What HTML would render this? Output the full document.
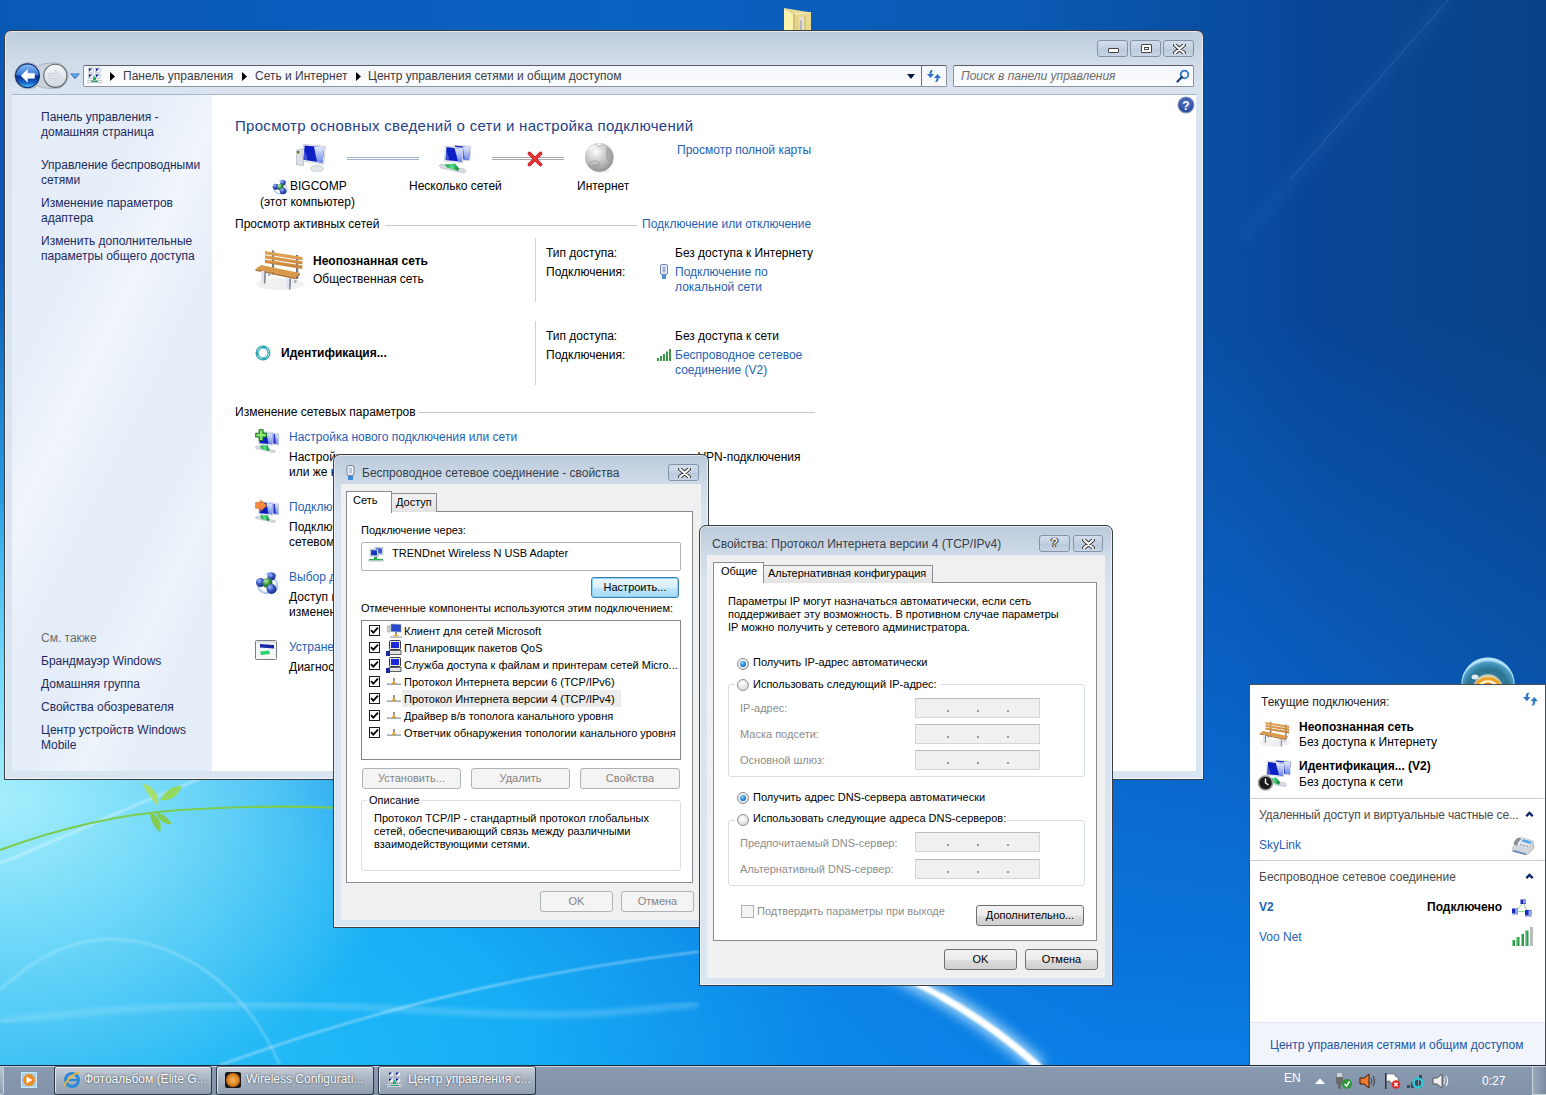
<!DOCTYPE html>
<html><head><meta charset="utf-8">
<style>
*{margin:0;padding:0;box-sizing:border-box}
html,body{width:1546px;height:1095px;overflow:hidden}
body{position:relative;font-family:"Liberation Sans",sans-serif;font-size:12px;color:#000;background:#0a56b0}
.a{position:absolute}
.t{position:absolute;white-space:nowrap;line-height:12px;font-size:12px}
.t11{position:absolute;white-space:nowrap;line-height:11px;font-size:11px}
#desk{left:0;top:0;width:1546px;height:1065px;overflow:hidden;
 background:
  radial-gradient(ellipse 420px 300px at 0px 800px, rgba(165,238,252,1) 0%, rgba(130,225,250,.75) 45%, rgba(100,210,248,0) 100%),
  radial-gradient(ellipse 380px 560px at 0px 820px, rgba(70,200,245,1) 0%, rgba(50,185,242,.8) 50%, rgba(30,160,238,0) 100%),
  linear-gradient(90deg, rgba(6,40,100,0) 80%, rgba(6,40,100,.22) 100%),
  radial-gradient(ellipse 1000px 560px at 120px 1065px, rgba(36,192,248,1) 0%, rgba(24,176,246,.95) 40%, rgba(12,140,236,.6) 72%, rgba(10,110,220,0) 100%),
  linear-gradient(180deg, rgba(10,100,210,0) 0%, rgba(10,100,210,0) 30%, rgba(10,110,218,.7) 70%, rgba(10,125,228,1) 100%),
  linear-gradient(90deg,#0a58b6 0%,#0a62c2 40%,#0a5ab4 65%,#08489a 85%,#0a4890 100%);}
/* window frame */
.frame{position:absolute;border:1px solid #3a3d42;border-radius:7px 7px 0 0;
 background:linear-gradient(#bccbdc 0px,#cfdbe8 30px,#d9e4f0 60px,#d9e5f1 100%);
 box-shadow:inset 0 0 0 1px rgba(255,255,255,.55)}
.client{position:absolute;background:#f0f0f0}
.cap{position:absolute;border:1px solid #8293aa;border-radius:3px;background:linear-gradient(#d3dded,#c3d0e2 50%,#b9c8dc 51%,#c8d5e6)}
.link{color:#1e62b4}
.btn{position:absolute;border:1px solid #707070;border-radius:3px;background:linear-gradient(#f2f2f2 0%,#ebebeb 50%,#dddddd 51%,#cfcfcf 100%);text-align:center;font-size:11px;line-height:18px;white-space:nowrap}
.btn.dis{border-color:#adb2b5;background:#f4f4f4;color:#838383}
.tab{position:absolute;border:1px solid #898c95;border-bottom:none;background:linear-gradient(#f2f2f2,#e3e3e3);font-size:11px;white-space:nowrap}
.grp{position:absolute;border:1px solid #d5dfe5;border-radius:3px}
.field{position:absolute;border:1px solid #d2d5d9;border-top-color:#b9bcc0;background:#f0f0f0}
.dis{color:#8d8d8d}
</style></head>
<body>
<svg width="0" height="0" style="position:absolute">
<defs>
 <linearGradient id="scr" x1="0" y1="0" x2="1" y2="1"><stop offset="0" stop-color="#1a2fb8"/><stop offset=".45" stop-color="#0a1aa0"/><stop offset=".5" stop-color="#8fa8f0"/><stop offset="1" stop-color="#c8d4fa"/></linearGradient>
 <linearGradient id="wood" x1="0" y1="0" x2="0" y2="1"><stop offset="0" stop-color="#e4a65a"/><stop offset="1" stop-color="#c7843a"/></linearGradient>
 <radialGradient id="globe" cx=".4" cy=".35" r=".7"><stop offset="0" stop-color="#f4f4f4"/><stop offset=".6" stop-color="#b9b9b9"/><stop offset="1" stop-color="#8a8a8a"/></radialGradient>
 <radialGradient id="ballB" cx=".35" cy=".3" r=".7"><stop offset="0" stop-color="#a9c0ff"/><stop offset=".5" stop-color="#3d5cc8"/><stop offset="1" stop-color="#1a2a8a"/></radialGradient>
 <radialGradient id="ballG" cx=".35" cy=".3" r=".7"><stop offset="0" stop-color="#c8f0c0"/><stop offset=".5" stop-color="#3a9a3a"/><stop offset="1" stop-color="#1a5a1a"/></radialGradient>
 <linearGradient id="cable" x1="0" y1="0" x2="1" y2="0"><stop offset="0" stop-color="#1a9a3a"/><stop offset=".5" stop-color="#5ae08a"/><stop offset="1" stop-color="#0a7a2a"/></linearGradient>
 <symbol id="bench" viewBox="0 0 60 55">
  <ellipse cx="30" cy="44" rx="24" ry="6" fill="#000" opacity=".06"/>
  <path d="M22 10.5h2.2v24h-2.2zM46 15h2.2v24h-2.2z" fill="#6e7888"/>
  <path d="M15 11L52.5 17V20.3L15 14.3Z M15 15.3L52.5 21.3V24.6L15 18.6Z M15 19.6L52.3 25.6V28.9L15 22.9Z" fill="url(#wood)"/>
  <path d="M5.5 29L11 25L50 33L45.5 37.5Z" fill="#d99a4c"/>
  <path d="M5.5 29L45.5 37.5V39.3L5.5 30.8Z" fill="#b57434"/>
  <path d="M45.5 37.5L50 33V34.6L45.5 39.3Z" fill="#a8692e"/>
  <path d="M11 31h4.5l-.6 12.5h-3.2z M36 38.5h4.5l-.6 11h-3.2z" fill="#dfe5f0"/>
  <path d="M14.5 31h1.5l-.6 12.5h-1.3z M39.5 38.5h1.5l-.6 11h-1.3z" fill="#6e7888"/>
  <path d="M18 33h2.5v3h-2.5zM44 40h2.5v3h-2.5z" fill="#a9b2c2"/>
 </symbol>
 <symbol id="pc" viewBox="0 0 30 28">
  <linearGradient id="scrL" x1="0" y1="0" x2="0" y2="1"><stop offset="0" stop-color="#e4ecff"/><stop offset="1" stop-color="#7088e8"/></linearGradient>
  <path d="M0.5 6L7.5 4.8V21.5L0.5 20.8Z" fill="#dcdfe3" stroke="#a9aeb5" stroke-width=".6"/>
  <rect x="1.3" y="7" width="2" height="2" fill="#4a5a3a"/><rect x="1.3" y="9" width="2" height="1" fill="#8ac040"/>
  <ellipse cx="21" cy="24.5" rx="6.5" ry="3.3" fill="#e2e5e8" stroke="#b9bdc3" stroke-width=".6"/>
  <path d="M7.5 0.3L29.5 2.3L27.8 20.2L6.2 16.9Z" fill="#f2f4f7" stroke="#b3b9c1" stroke-width=".6"/>
  <path d="M8.6 1.5L28.2 3.3L26.6 18.7L7.4 15.8Z" fill="#0b1fc2"/>
  <path d="M18 2.4L28.2 3.3L26.6 18.7L21 17.9Z" fill="url(#scrL)"/>
  <path d="M8.4 6L11.5 13.5L11 16.1L7.4 15.8Z" fill="#5a6ee0" opacity=".7"/>
 </symbol>
 <symbol id="multi" viewBox="0 0 32 29">
  <path d="M15 -0.3L32 1.5L30.8 16L15 14Z" fill="#f0f3f7" stroke="#b5bcc6" stroke-width=".5"/>
  <path d="M16 0.6L31.2 2.2L30 15L16 13.4Z" fill="#0b1fc2"/>
  <path d="M24 1.4L31.2 2.2L30 15L25.5 14.5Z" fill="url(#scrL)"/>
  <path d="M6.3 0.9L24.3 2.9L24 17.8L5.4 16Z" fill="#f2f4f7" stroke="#b5bcc6" stroke-width=".5"/>
  <path d="M7.5 2L23.3 3.9L23 16.7L6.5 15Z" fill="#0b1fc2"/>
  <path d="M15.5 2.9L23.3 3.9L23 16.7L19 16.2Z" fill="url(#scrL)"/>
  <path d="M7.3 6L10 12.5L9.6 15.3L6.5 15Z" fill="#5a6ee0" opacity=".7"/>
  <path d="M0.5 21C0 19.5 2 19 4 19.5L20 23.5C23 23 26 24 26.8 25.5C27.5 27 25.5 28.5 23 27.8L4 23.5C2 23.2 0.8 22.3 0.5 21Z" fill="#d5dadf" stroke="#aeb4ba" stroke-width=".5"/>
  <path d="M5.8 19.5L16 18.5L20 23.5L19 26L8 22.5Z" fill="url(#cable)"/>
 </symbol>
 <symbol id="atom" viewBox="0 0 24 24">
  <path d="M3 15C4 20 9 23 14 22" stroke="#a8c0e8" stroke-width="2.2" fill="none" opacity=".85"/>
  <path d="M11 3.5C14 1 19 1.5 21 5" stroke="#a8c0e8" stroke-width="2" fill="none" opacity=".85"/>
  <path d="M20 9C23 12 23 17 21 20" stroke="#a8c0e8" stroke-width="2" fill="none" opacity=".85"/>
  <circle cx="5.5" cy="11.5" r="4.5" fill="url(#ballB)"/>
  <circle cx="16.5" cy="5.5" r="4" fill="url(#ballB)"/>
  <circle cx="12.5" cy="12" r="5" fill="url(#ballG)"/>
  <circle cx="16.5" cy="18" r="5" fill="url(#ballB)"/>
 </symbol>
 <symbol id="netpc" viewBox="0 0 24 24">
  <path d="M16.5 3.8L24 4.5V16L16.5 15.2Z" fill="#eef1f6" stroke="#b0b8c4" stroke-width=".4"/>
  <path d="M17.5 4.8L23.2 5.3V15.2L17.5 14.6Z" fill="#2a3ad0"/>
  <path d="M20 5L23.2 5.3V15.2L21 15Z" fill="url(#scrL)"/>
  <path d="M3.8 2.3L18.5 3.6L18 16.3L3.5 15.2Z" fill="#f2f4f8" stroke="#b0b8c4" stroke-width=".4"/>
  <path d="M4.8 3.3L17.5 4.5L17.2 15.3L4.5 14.3Z" fill="#0b1fc2"/>
  <path d="M11.5 3.9L17.5 4.5L17.2 15.3L13.5 15Z" fill="url(#scrL)"/>
  <path d="M0.5 18.5C0.5 17.5 2 17 3.5 17.5L17 21C19 20.8 20.5 21.5 20.5 22.5C20.5 23.5 19 24 17.5 23.5L3.5 20C1.5 20 0.5 19.5 0.5 18.5Z" fill="#d3d9de" stroke="#a8b0b8" stroke-width=".4"/>
  <path d="M5 16.5L12.5 16L14.5 20.5L13.5 22L6.5 20Z" fill="url(#cable)"/>
 </symbol>
</defs></svg>
<div id="desk" class="a"><svg class="a" style="left:0;top:0" width="1546" height="1065" viewBox="0 0 1546 1065">
 <defs><filter id="blur3"><feGaussianBlur stdDeviation="2.5"/></filter><filter id="blur1"><feGaussianBlur stdDeviation="1"/></filter><filter id="blur6"><feGaussianBlur stdDeviation="6"/></filter></defs>
 <path d="M0 1021 C 150 1004, 260 1000, 420 1010 S 620 1012, 698 1004" stroke="#d8f4ff" stroke-width="6" fill="none" opacity=".25" filter="url(#blur3)"/>
 <path d="M0 990 C 40 952, 80 939, 110 939 C 170 940, 240 975, 280 1065" stroke="#d8f4ff" stroke-width="2.5" fill="none" opacity=".3" filter="url(#blur1)"/>
 <path d="M220 1065 C 400 1000, 560 965, 760 945" stroke="#e8f8ff" stroke-width="1.6" fill="none" opacity=".6" filter="url(#blur1)"/>
 <path d="M0 863 C 60 840, 130 805, 210 775" stroke="#e0f8ff" stroke-width="2" fill="none" opacity=".6" filter="url(#blur1)"/>
 <path d="M0 850 C 60 828, 120 814, 180 810 S 300 806, 340 808" stroke="#7ccc4e" stroke-width="2.2" fill="none"/>
 <path d="M142 783 C 146 792, 152 800, 158 806 C 160 796, 154 786, 142 783Z" fill="#a8e070"/>
 <path d="M160 800 C 166 790, 172 786, 182 786 C 178 796, 170 802, 160 800Z" fill="#94d860"/>
 <path d="M150 812 C 150 820, 154 828, 160 832 C 163 824, 158 815, 150 812Z" fill="#84cc50"/>
 <path d="M156 812 C 163 814, 168 818, 172 824 C 164 825, 158 820, 156 812Z" fill="#84cc50"/>
 <path d="M820 945 Q 950 985 1040 1068" stroke="#d8f4ff" stroke-width="16" fill="none" filter="url(#blur6)" opacity=".7"/>
 <path d="M820 945 Q 950 985 1040 1068" stroke="#ffffff" stroke-width="6" fill="none" filter="url(#blur1)"/>
 <path d="M940 995.75 Q 995 1026.5 1040 1068" stroke="#ffffff" stroke-width="7" fill="none" filter="url(#blur1)" opacity=".6"/>
 
 <path d="M1448 0 L 1240 240" stroke="#4a8ad8" stroke-width="14" fill="none" opacity=".1" filter="url(#blur6)"/>
 <path d="M1448 0 L 1290 180" stroke="#8ab8f0" stroke-width="1" fill="none" opacity=".22"/>
</svg>
<svg class="a" style="left:784px;top:8px" width="28" height="23" viewBox="0 0 28 23"><path d="M0 0L10 6V23H0Z" fill="#fbf2ae"/><path d="M0 0L27 4.5V23H10V6Z" fill="#e9da92"/><path d="M10 6L27 4.5" stroke="#f6eebc" stroke-width="1"/><path d="M10 6V23" stroke="#b8a860" stroke-width="1.2"/><rect x="16" y="9" width="3.5" height="14" fill="#e8e4dc"/><rect x="16.5" y="12" width="1" height="10" fill="#8a8a9a"/><path d="M21 8V23" stroke="#c6b470" stroke-width="1"/><path d="M13 7V23" stroke="#d8c880" stroke-width="1"/></svg>
</div>

<!-- ================= MAIN WINDOW ================= -->
<div id="mainwin" class="frame" style="left:4px;top:30px;width:1200px;height:750px"></div>
<!-- caption buttons -->
<div class="cap" style="left:1097px;top:40px;width:31px;height:17px"><div class="a" style="left:10px;top:7px;width:11px;height:5px;border:1px solid #444;background:#fff;border-radius:1px"></div></div>
<div class="cap" style="left:1130px;top:40px;width:31px;height:17px"><div class="a" style="left:10px;top:3px;width:11px;height:9px;border:1px solid #444;background:#fff;border-radius:1px"><div class="a" style="left:2px;top:2px;width:5px;height:3px;border:1px solid #444"></div></div></div>
<div class="cap" style="left:1163px;top:40px;width:31px;height:17px"><svg class="a" style="left:9px;top:3px" width="13" height="10" viewBox="0 0 13 10"><path d="M2 1L11 9M11 1L2 9" stroke="#3a3a3a" stroke-width="4" stroke-linecap="round"/><path d="M2 1L11 9M11 1L2 9" stroke="#fff" stroke-width="2" stroke-linecap="round"/></svg></div>
<!-- nav buttons -->
<svg class="a" style="left:13px;top:61px" width="70" height="30" viewBox="0 0 70 30">
 <defs>
  <linearGradient id="bkb" x1="0" y1="0" x2="0" y2="1"><stop offset="0" stop-color="#8cc0f4"/><stop offset=".45" stop-color="#3a78d8"/><stop offset=".52" stop-color="#0a2e8e"/><stop offset=".8" stop-color="#1a68c8"/><stop offset="1" stop-color="#48c8f8"/></linearGradient>
  <linearGradient id="fwb" x1="0" y1="0" x2="0" y2="1"><stop offset="0" stop-color="#f6f8fa"/><stop offset=".5" stop-color="#e4e8ec"/><stop offset="1" stop-color="#d0d6dc"/></linearGradient>
 </defs>
 <path d="M14.5 1.8C19 1.8 22 3.5 25 5.5C27 4 30 2 42.3 2A12.7 12.7 0 0 1 42.3 27.5C30 27.5 27 26 25 24.5C22 26.5 19 27.8 14.5 27.8A13 13 0 0 1 14.5 1.8Z" fill="#c9d0d8" stroke="#9aa2ac" stroke-width=".8" opacity=".85"/>
 <circle cx="42.3" cy="14.8" r="11.6" fill="url(#fwb)" stroke="#5e6670" stroke-width="1.1"/>
 <path d="M48 15L42 9.5V12.5H36V17.5H42V20.5Z" fill="#dde2e8" stroke="#c2c8d0" stroke-width=".6"/>
 <circle cx="14.5" cy="14.8" r="11.9" fill="url(#bkb)" stroke="#0c2a6a" stroke-width="1.1"/>
 <path d="M8 14.8L14.5 8.5V12.3H21.5V17.3H14.5V21Z" fill="#fff" stroke="#e8eef8" stroke-width=".6"/>
 <path d="M57 12.5H67L62 18Z" fill="#1e6ac0"/>
 <path d="M58.5 13.2H65.5L62 16.6Z" fill="#6ab0f0"/>
</svg>
<!-- address bar -->
<div class="a" style="left:83px;top:65px;width:864px;height:22px;border:1px solid #8e949c;border-top-color:#5b5f66;border-radius:2px;background:linear-gradient(#f4f7fb,#fbfcfe)"></div>
<div class="a" style="left:921px;top:66px;width:1px;height:20px;background:#6b6f75"></div>
<svg class="a" style="left:86px;top:67px" width="17" height="17" viewBox="0 0 17 17"><g fill="#e8ecf2" stroke="#a8b0bc" stroke-width=".5"><rect x="2.5" y="1" width="5" height="4.5"/><rect x="9.5" y="1" width="5" height="4.5"/><rect x="2.5" y="7" width="5" height="4.5"/><rect x="9.5" y="7" width="5" height="4.5"/></g><g fill="#0a1a9a"><path d="M3 1.5h3l-3 3z"/><path d="M10 1.5h3l-3 3z"/><path d="M3 7.5h3l-3 3z"/><path d="M10 7.5h3l-3 3z"/></g><path d="M7 11L8.5 9L10 11V13H12V15H5V13H7Z" fill="#20b060"/><rect x="1" y="13.2" width="15" height=".8" fill="#b8c0c8"/><rect x="1" y="15" width="15" height=".8" fill="#b8c0c8"/></svg>
<svg class="a" style="left:110px;top:72px" width="6" height="9" viewBox="0 0 6 9"><path d="M0 0L5 4.5L0 9Z" fill="#000"/></svg>
<div class="t" style="left:123px;top:70px;color:#3c3c46">Панель управления</div>
<svg class="a" style="left:242px;top:72px" width="6" height="9" viewBox="0 0 6 9"><path d="M0 0L5 4.5L0 9Z" fill="#000"/></svg>
<div class="t" style="left:255px;top:70px;color:#3c3c46">Сеть и Интернет</div>
<svg class="a" style="left:356px;top:72px" width="6" height="9" viewBox="0 0 6 9"><path d="M0 0L5 4.5L0 9Z" fill="#000"/></svg>
<div class="t" style="left:368px;top:70px;color:#3c3c46">Центр управления сетями и общим доступом</div>
<svg class="a" style="left:907px;top:74px" width="8" height="5" viewBox="0 0 8 5"><path d="M0 0H8L4 5Z" fill="#0b1a40"/></svg>
<svg class="a" style="left:926px;top:69px" width="16" height="14" viewBox="0 0 16 14"><path d="M6 1C4 1 3.5 3 3.5 5H1L4.5 9L8 5H5.5C5.5 3.5 6 2 7 1Z" fill="#2f74c6"/><path d="M10 13C12 13 12.5 11 12.5 9H15L11.5 5L8 9H10.5C10.5 10.5 10 12 9 13Z" fill="#2f74c6"/></svg>
<!-- search -->
<div class="a" style="left:953px;top:65px;width:241px;height:22px;border:1px solid #8e949c;border-top-color:#5b5f66;border-radius:2px;background:linear-gradient(#f4f7fb,#fbfcfe)"></div>
<div class="t" style="left:961px;top:70px;color:#6d6d6d;font-style:italic">Поиск в панели управления</div>
<svg class="a" style="left:1176px;top:69px" width="14" height="14" viewBox="0 0 14 14"><circle cx="8.5" cy="5.5" r="3.8" fill="none" stroke="#2a78c8" stroke-width="1.8"/><path d="M6 8L1.5 12.5" stroke="#1f3a66" stroke-width="2.2" stroke-linecap="round"/></svg>
<!-- content -->
<div class="a" style="left:12px;top:94px;width:1184px;height:677px;background:#fff;border-top:1px solid #a9b6c6"></div>
<div class="a" style="left:12px;top:95px;width:200px;height:676px;background:linear-gradient(116deg, rgba(255,255,255,0) 25%, rgba(255,255,255,.45) 40%, rgba(255,255,255,0) 55%, rgba(255,255,255,0) 65%, rgba(255,255,255,.35) 75%, rgba(255,255,255,0) 85%),#e5edf8"></div>
<svg class="a" style="left:1177px;top:96px" width="18" height="18" viewBox="0 0 18 18"><circle cx="9" cy="9" r="8" fill="#2f4fa6" stroke="#8b9bb8" stroke-width="1.2"/><circle cx="9" cy="7" r="6" fill="#5a78c8" opacity=".5"/><text x="9" y="13.5" font-family="Liberation Sans" font-weight="bold" font-size="12" fill="#fff" text-anchor="middle">?</text></svg>
<!-- sidebar -->
<div class="a" style="color:#1c2a62">
<div class="t" style="left:41px;top:111px">Панель управления -</div>
<div class="t" style="left:41px;top:126px">домашняя страница</div>
<div class="t" style="left:41px;top:159px">Управление беспроводными</div>
<div class="t" style="left:41px;top:174px">сетями</div>
<div class="t" style="left:41px;top:197px">Изменение параметров</div>
<div class="t" style="left:41px;top:212px">адаптера</div>
<div class="t" style="left:41px;top:235px">Изменить дополнительные</div>
<div class="t" style="left:41px;top:250px">параметры общего доступа</div>
<div class="t" style="left:41px;top:632px;color:#6d6d6d">См. также</div>
<div class="t" style="left:41px;top:655px">Брандмауэр Windows</div>
<div class="t" style="left:41px;top:678px">Домашняя группа</div>
<div class="t" style="left:41px;top:701px">Свойства обозревателя</div>
<div class="t" style="left:41px;top:724px">Центр устройств Windows</div>
<div class="t" style="left:41px;top:739px">Mobile</div>
</div>
<!-- heading -->
<div class="t" style="left:235px;top:118px;font-size:15px;line-height:15px;color:#1e3f8a;letter-spacing:.3px">Просмотр основных сведений о сети и настройка подключений</div>
<svg class="a" style="left:296px;top:144px" width="30" height="28"><use href="#pc"/></svg>
<div class="a" style="left:347px;top:157px;width:72px;height:3px;border-top:1px solid #a3b4ca;border-bottom:1px solid #a3b4ca"></div>
<svg class="a" style="left:439px;top:145px" width="32" height="29"><use href="#multi"/></svg>
<div class="a" style="left:492px;top:157px;width:72px;height:3px;border-top:1px solid #a8a8a8;border-bottom:1px solid #a8a8a8"></div>
<svg class="a" style="left:527px;top:151px" width="16" height="16" viewBox="0 0 16 16"><path d="M2.5 2.5L13.5 13.5M13.5 2.5L2.5 13.5" stroke="#c2151b" stroke-width="3.6" stroke-linecap="round"/><path d="M2.5 2.5L13.5 13.5M13.5 2.5L2.5 13.5" stroke="#ef3a3a" stroke-width="1.8" stroke-linecap="round"/></svg>
<svg class="a" style="left:584px;top:142px" width="32" height="32" viewBox="0 0 32 32"><defs><radialGradient id="glb2" cx=".38" cy=".3" r=".75"><stop offset="0" stop-color="#ffffff"/><stop offset=".25" stop-color="#e2e2e2"/><stop offset=".7" stop-color="#b4b4b4"/><stop offset="1" stop-color="#8c8c8c"/></radialGradient></defs>
<ellipse cx="17" cy="28.5" rx="9" ry="2.5" fill="#000" opacity=".07"/>
<circle cx="15.3" cy="15.3" r="14.4" fill="url(#glb2)"/>
<path d="M5 21C7 18 12 17.5 15 19.5C17 21 17 24 14 26.5C11 28.5 7 27.5 5.5 25Z" fill="#9a9a9a" opacity=".55"/>
<path d="M7 22C9 20.5 12 20.5 13.5 21.5" stroke="#e8e8e8" stroke-width="1.2" fill="none" opacity=".7"/>
<path d="M23 5.5C25.5 7 27.5 10 27.5 14C27.5 17 26 19.5 24.5 19C23 18 22.5 14 22.5 10C22.5 8 22.5 6.5 23 5.5Z" fill="#a8a8a8" stroke="#8a8a8a" stroke-width=".7" opacity=".8"/>
<path d="M12 1.5L14 4.5L17 4L18 1.2" fill="#f4f4f4" stroke="#9a9a9a" stroke-width=".6"/>
<path d="M5 8C7 5.5 10 4.5 12.5 4.5" stroke="#ffffff" stroke-width="2" fill="none" opacity=".7"/>
</svg>
<svg class="a" style="left:272px;top:179px" width="16" height="16"><use href="#atom"/></svg>
<div class="t" style="left:290px;top:180px">BIGCOMP</div>
<div class="t" style="left:260px;top:196px">(этот компьютер)</div>
<div class="t" style="left:409px;top:180px">Несколько сетей</div>
<div class="t" style="left:577px;top:180px">Интернет</div>
<div class="t link" style="left:677px;top:144px">Просмотр полной карты</div>
<!-- active networks -->
<div class="t" style="left:235px;top:218px">Просмотр активных сетей</div>
<div class="a" style="left:385px;top:225px;width:252px;height:1px;background:#c8c8c8"></div>
<div class="t link" style="left:642px;top:218px">Подключение или отключение</div>
<svg class="a" style="left:250px;top:240px" width="60" height="55"><use href="#bench"/></svg>
<div class="t" style="left:313px;top:255px;font-weight:bold">Неопознанная сеть</div>
<div class="t" style="left:313px;top:273px">Общественная сеть</div>
<div class="a" style="left:535px;top:238px;width:1px;height:64px;background:#d2d2d2"></div>
<div class="t" style="left:546px;top:247px">Тип доступа:</div>
<div class="t" style="left:546px;top:266px">Подключения:</div>
<div class="t" style="left:675px;top:247px">Без доступа к Интернету</div>
<svg class="a" style="left:659px;top:264px" width="10" height="16" viewBox="0 0 10 16"><rect x="1.5" y="0.5" width="7" height="10" rx="1.5" fill="#e9eef6" stroke="#7a8aa8"/><rect x="3.5" y="2.5" width="3" height="6" fill="#9fb4d8"/><rect x="3" y="11" width="4" height="4" fill="#4a90d8"/></svg>
<div class="t link" style="left:675px;top:266px">Подключение по</div>
<div class="t link" style="left:675px;top:281px">локальной сети</div>
<svg class="a" style="left:255px;top:345px" width="16" height="16" viewBox="0 0 16 16"><circle cx="8" cy="8" r="6" fill="none" stroke="#2aa4b4" stroke-width="3"/><circle cx="8" cy="8" r="6" fill="none" stroke="#bfeef0" stroke-width="1" stroke-dasharray="6 4"/></svg>
<div class="t" style="left:281px;top:347px;font-weight:bold">Идентификация...</div>
<div class="a" style="left:535px;top:321px;width:1px;height:64px;background:#d2d2d2"></div>
<div class="t" style="left:546px;top:330px">Тип доступа:</div>
<div class="t" style="left:546px;top:349px">Подключения:</div>
<div class="t" style="left:675px;top:330px">Без доступа к сети</div>
<svg class="a" style="left:657px;top:349px" width="14" height="12" viewBox="0 0 14 12"><rect x="0" y="9" width="2" height="3" fill="#3a9a4a"/><rect x="3" y="7" width="2" height="5" fill="#3a9a4a"/><rect x="6" y="5" width="2" height="7" fill="#3a9a4a"/><rect x="9" y="2.5" width="2" height="9.5" fill="#3a9a4a"/><rect x="12" y="0" width="2" height="12" fill="#3a9a4a"/></svg>
<div class="t link" style="left:675px;top:349px">Беспроводное сетевое</div>
<div class="t link" style="left:675px;top:364px">соединение (V2)</div>
<!-- change settings -->
<div class="t" style="left:235px;top:406px">Изменение сетевых параметров</div>
<div class="a" style="left:418px;top:412px;width:397px;height:1px;background:#c8c8c8"></div>
<svg class="a" style="left:255px;top:429px" width="24" height="24" viewBox="0 0 24 24"><use href="#netpc"/><path d="M0.8 4.3h3.5v-3.5h3.7v3.5h3.5v3.7h-3.5v3.5h-3.7v-3.5h-3.5z" fill="#8ee878" stroke="#167016" stroke-width="1.1"/></svg>
<div class="t link" style="left:289px;top:431px">Настройка нового подключения или сети</div>
<div class="t" style="left:289px;top:451px">Настройка широкополосного,</div><div class="t" style="left:698px;top:451px">VPN-подключения</div>
<div class="t" style="left:289px;top:466px">или же настройка маршрутизатора или точки доступа.</div>
<svg class="a" style="left:255px;top:499px" width="24" height="24" viewBox="0 0 24 24"><use href="#netpc"/><path d="M0.5 3.5h5v-2.5l6.5 5.5l-6.5 5.8v-3h-5z" fill="#f58a3a" stroke="#c8601a" stroke-width=".5"/></svg>
<div class="t link" style="left:289px;top:501px">Подключение к сети</div>
<div class="t" style="left:289px;top:521px">Подключение или повторное подключение к беспроводному, проводному,</div>
<div class="t" style="left:289px;top:536px">сетевому или VPN-подключению.</div>
<svg class="a" style="left:255px;top:571px" width="24" height="24"><use href="#atom"/></svg>
<div class="t link" style="left:289px;top:571px">Выбор домашней группы и параметров общего доступа</div>
<div class="t" style="left:289px;top:591px">Доступ к файлам и принтерам, расположенным на других сетевых компьютерах, или</div>
<div class="t" style="left:289px;top:606px">изменение параметров общего доступа.</div>
<svg class="a" style="left:255px;top:640px" width="23" height="21" viewBox="0 0 23 21"><rect x="0.5" y="0.5" width="21" height="19" rx="1" fill="#f4f6f8" stroke="#7a7e84"/><rect x="1" y="1" width="20" height="2" fill="#dfe3e8"/><path d="M5 4L19 5V8.5L5 7.5Z" fill="#1a28a8"/><path d="M5 11.5L14 10.5L15 14L6 15Z" fill="#2ad46a"/></svg>
<div class="t link" style="left:289px;top:641px">Устранение неполадок</div>
<div class="t" style="left:289px;top:661px">Диагностика и исправление сетевых проблем или получение сведений об исправлении.</div>

<!-- ================= DIALOG 1 ================= -->
<div id="dlg1" class="frame" style="left:333px;top:454px;width:376px;height:474px"></div>
<svg class="a" style="left:346px;top:465px" width="9" height="15" viewBox="0 0 9 15"><rect x="1" y="0.5" width="7" height="10" rx="2" fill="#f4f6fa" stroke="#6e7e98" stroke-width="1"/><rect x="3" y="2.5" width="3" height="6" fill="#b8c6dc"/><rect x="2" y="11" width="5" height="4" fill="#3a8ad8"/></svg>
<div class="t" style="left:362px;top:467px;color:#373f4b">Беспроводное сетевое соединение - свойства</div>
<div class="cap" style="left:668px;top:464px;width:31px;height:17px"><svg class="a" style="left:9px;top:3px" width="13" height="10" viewBox="0 0 13 10"><path d="M2 1L11 9M11 1L2 9" stroke="#3a3a3a" stroke-width="4" stroke-linecap="round"/><path d="M2 1L11 9M11 1L2 9" stroke="#fff" stroke-width="2" stroke-linecap="round"/></svg></div>
<div class="client" style="left:341px;top:484px;width:360px;height:436px"></div>
<div class="a" style="left:346px;top:511px;width:347px;height:372px;background:#fff;border:1px solid #898c95"></div>
<div class="tab" style="left:391px;top:493px;width:46px;height:19px"></div>
<div class="a" style="left:346px;top:491px;width:46px;height:22px;background:#fff;border:1px solid #898c95;border-bottom:none"></div>
<div class="t11" style="left:353px;top:495px">Сеть</div>
<div class="t11" style="left:396px;top:497px">Доступ</div>
<div class="t11" style="left:361px;top:525px">Подключение через:</div>
<div class="a" style="left:361px;top:542px;width:320px;height:29px;border:1px solid #b2b2b2;border-radius:2px;background:#fff"></div>
<svg class="a" style="left:368px;top:546px" width="16" height="16" viewBox="0 0 16 16"><path d="M7 1L15 1.5V8.5L7 8Z" fill="#e4e9f2" stroke="#8a96aa" stroke-width=".5"/><path d="M8 2L14 2.4V7.6L8 7.2Z" fill="#3a5ad8"/><path d="M2 3L10 3.5V10.5L2 10Z" fill="#eef1f6" stroke="#8a96aa" stroke-width=".5"/><path d="M3 4L9 4.4V9.6L3 9.2Z" fill="#1a36c0"/><rect x="6" y="11" width="3" height="2" fill="#2aa84a"/><rect x="1" y="13" width="14" height="1.5" fill="#2aa84a"/><rect x="0" y="14.5" width="16" height="1" fill="#b9c2cc"/></svg>
<div class="t11" style="left:392px;top:548px">TRENDnet Wireless N USB Adapter</div>
<div class="btn" style="left:591px;top:577px;width:88px;height:21px;border-color:#3c7fb1;background:linear-gradient(#eaf6fd 0%,#d9f0fc 50%,#bee6fd 51%,#a7d9f5 100%);box-shadow:inset 0 0 0 1px #8fd3f8">Настроить...</div>
<div class="t11" style="left:361px;top:603px">Отмеченные компоненты используются этим подключением:</div>
<div class="a" style="left:361px;top:620px;width:320px;height:140px;border:1px solid #828790;background:#fff"></div>
<div class="a" style="left:402px;top:690px;width:219px;height:17px;background:#ececec"></div>
<div class="a" style="left:369px;top:625px;width:11px;height:11px;border:1px solid #1c1c1c;background:#fff"></div><svg class="a" style="left:370px;top:626px" width="9" height="9" viewBox="0 0 9 9"><path d="M1 4.2L3.3 6.6L8 1.6" stroke="#000" stroke-width="1.8" fill="none"/></svg>
<svg class="a" style="left:387px;top:623px" width="15" height="16" viewBox="0 0 15 16"><rect x="0" y="3" width="3" height="6" fill="#cfd8cf" stroke="#7a8a7a" stroke-width=".5"/><path d="M4 1L14 1.5V9L4 8.5Z" fill="#2a4ad0" stroke="#8894a8" stroke-width=".6"/><rect x="8" y="9" width="2" height="3" fill="#8a8a8a"/><path d="M6 13L9 10.5L12 13Z" fill="#e8a830"/><rect x="3" y="13.5" width="12" height="1.2" fill="#a0a0a0"/></svg>
<div class="t11" style="left:404px;top:626px">Клиент для сетей Microsoft</div>
<div class="a" style="left:369px;top:642px;width:11px;height:11px;border:1px solid #1c1c1c;background:#fff"></div><svg class="a" style="left:370px;top:643px" width="9" height="9" viewBox="0 0 9 9"><path d="M1 4.2L3.3 6.6L8 1.6" stroke="#000" stroke-width="1.8" fill="none"/></svg>
<svg class="a" style="left:386px;top:640px" width="16" height="16" viewBox="0 0 16 16"><rect x="3.5" y="0.5" width="11" height="9" rx="1" fill="#e8eaee" stroke="#3a3a3a"/><rect x="5" y="2" width="8" height="6" fill="#1a2ad8"/><path d="M3 10.5h12v4h-12z" fill="#dfe2e6" stroke="#3a3a3a" stroke-width=".8"/><rect x="0" y="11" width="4" height="5" fill="#1a2a9a"/></svg>
<div class="t11" style="left:404px;top:643px">Планировщик пакетов QoS</div>
<div class="a" style="left:369px;top:659px;width:11px;height:11px;border:1px solid #1c1c1c;background:#fff"></div><svg class="a" style="left:370px;top:660px" width="9" height="9" viewBox="0 0 9 9"><path d="M1 4.2L3.3 6.6L8 1.6" stroke="#000" stroke-width="1.8" fill="none"/></svg>
<svg class="a" style="left:386px;top:657px" width="16" height="16" viewBox="0 0 16 16"><rect x="3.5" y="0.5" width="11" height="9" rx="1" fill="#e8eaee" stroke="#3a3a3a"/><rect x="5" y="2" width="8" height="6" fill="#1a2ad8"/><path d="M3 10.5h12v4h-12z" fill="#dfe2e6" stroke="#3a3a3a" stroke-width=".8"/><rect x="0" y="11" width="4" height="5" fill="#1a2a9a"/></svg>
<div class="t11" style="left:404px;top:660px">Служба доступа к файлам и принтерам сетей Micro...</div>
<div class="a" style="left:369px;top:676px;width:11px;height:11px;border:1px solid #1c1c1c;background:#fff"></div><svg class="a" style="left:370px;top:677px" width="9" height="9" viewBox="0 0 9 9"><path d="M1 4.2L3.3 6.6L8 1.6" stroke="#000" stroke-width="1.8" fill="none"/></svg>
<svg class="a" style="left:387px;top:678px" width="14" height="8" viewBox="0 0 14 8"><rect x="0" y="5.5" width="14" height="1.3" fill="#8a97a8"/><path d="M4.5 6L7 2.5L9.5 6Z" fill="#e0a020"/><rect x="6.3" y="0" width="1.4" height="3" fill="#6a6a6a"/></svg>
<div class="t11" style="left:404px;top:677px">Протокол Интернета версии 6 (TCP/IPv6)</div>
<div class="a" style="left:369px;top:693px;width:11px;height:11px;border:1px solid #1c1c1c;background:#fff"></div><svg class="a" style="left:370px;top:694px" width="9" height="9" viewBox="0 0 9 9"><path d="M1 4.2L3.3 6.6L8 1.6" stroke="#000" stroke-width="1.8" fill="none"/></svg>
<svg class="a" style="left:387px;top:695px" width="14" height="8" viewBox="0 0 14 8"><rect x="0" y="5.5" width="14" height="1.3" fill="#8a97a8"/><path d="M4.5 6L7 2.5L9.5 6Z" fill="#e0a020"/><rect x="6.3" y="0" width="1.4" height="3" fill="#6a6a6a"/></svg>
<div class="t11" style="left:404px;top:694px">Протокол Интернета версии 4 (TCP/IPv4)</div>
<div class="a" style="left:369px;top:710px;width:11px;height:11px;border:1px solid #1c1c1c;background:#fff"></div><svg class="a" style="left:370px;top:711px" width="9" height="9" viewBox="0 0 9 9"><path d="M1 4.2L3.3 6.6L8 1.6" stroke="#000" stroke-width="1.8" fill="none"/></svg>
<svg class="a" style="left:387px;top:712px" width="14" height="8" viewBox="0 0 14 8"><rect x="0" y="5.5" width="14" height="1.3" fill="#8a97a8"/><path d="M4.5 6L7 2.5L9.5 6Z" fill="#e0a020"/><rect x="6.3" y="0" width="1.4" height="3" fill="#6a6a6a"/></svg>
<div class="t11" style="left:404px;top:711px">Драйвер в/в тополога канального уровня</div>
<div class="a" style="left:369px;top:727px;width:11px;height:11px;border:1px solid #1c1c1c;background:#fff"></div><svg class="a" style="left:370px;top:728px" width="9" height="9" viewBox="0 0 9 9"><path d="M1 4.2L3.3 6.6L8 1.6" stroke="#000" stroke-width="1.8" fill="none"/></svg>
<svg class="a" style="left:387px;top:729px" width="14" height="8" viewBox="0 0 14 8"><rect x="0" y="5.5" width="14" height="1.3" fill="#8a97a8"/><path d="M4.5 6L7 2.5L9.5 6Z" fill="#e0a020"/><rect x="6.3" y="0" width="1.4" height="3" fill="#6a6a6a"/></svg>
<div class="t11" style="left:404px;top:728px">Ответчик обнаружения топологии канального уровня</div>
<div class="btn dis" style="left:362px;top:768px;width:99px;height:21px">Установить...</div>
<div class="btn dis" style="left:471px;top:768px;width:99px;height:21px">Удалить</div>
<div class="btn dis" style="left:580px;top:768px;width:100px;height:21px">Свойства</div>
<div class="grp" style="left:361px;top:800px;width:320px;height:71px"></div>
<div class="t11" style="left:367px;top:795px;background:#fff;padding:0 2px">Описание</div>
<div class="t11" style="left:374px;top:813px">Протокол TCP/IP - стандартный протокол глобальных</div>
<div class="t11" style="left:374px;top:826px">сетей, обеспечивающий связь между различными</div>
<div class="t11" style="left:374px;top:839px">взаимодействующими сетями.</div>
<div class="btn dis" style="left:540px;top:891px;width:73px;height:21px">OK</div>
<div class="btn dis" style="left:621px;top:891px;width:73px;height:21px">Отмена</div>

<!-- ================= DIALOG 2 ================= -->
<div id="dlg2" class="frame" style="left:699px;top:525px;width:414px;height:461px"></div>
<div class="t" style="left:712px;top:538px;color:#373f4b">Свойства: Протокол Интернета версии 4 (TCP/IPv4)</div>
<div class="cap" style="left:1039px;top:535px;width:31px;height:17px"><div class="a" style="left:0;top:0;width:29px;height:15px;text-align:center;font-weight:bold;font-size:12px;line-height:15px;color:#fff;text-shadow:0 0 1px #000,0 0 1px #000,1px 0 0 #333,-1px 0 0 #333">?</div></div>
<div class="cap" style="left:1073px;top:535px;width:30px;height:17px"><svg class="a" style="left:8px;top:3px" width="13" height="10" viewBox="0 0 13 10"><path d="M2 1L11 9M11 1L2 9" stroke="#3a3a3a" stroke-width="4" stroke-linecap="round"/><path d="M2 1L11 9M11 1L2 9" stroke="#fff" stroke-width="2" stroke-linecap="round"/></svg></div>
<div class="client" style="left:707px;top:555px;width:398px;height:423px"></div>
<div class="a" style="left:713px;top:582px;width:384px;height:359px;background:#fff;border:1px solid #898c95"></div>
<div class="tab" style="left:763px;top:565px;width:170px;height:18px"></div>
<div class="a" style="left:713px;top:562px;width:51px;height:21px;background:#fff;border:1px solid #898c95;border-bottom:none"></div>
<div class="t11" style="left:721px;top:566px">Общие</div>
<div class="t11" style="left:768px;top:568px">Альтернативная конфигурация</div>
<div class="t11" style="left:728px;top:596px">Параметры IP могут назначаться автоматически, если сеть</div>
<div class="t11" style="left:728px;top:609px">поддерживает эту возможность. В противном случае параметры</div>
<div class="t11" style="left:728px;top:622px">IP можно получить у сетевого администратора.</div>
<div class="grp" style="left:728px;top:684px;width:357px;height:93px"></div>
<div class="grp" style="left:728px;top:820px;width:357px;height:66px"></div>
<div class="a" style="left:737px;top:658px;width:12px;height:12px;border-radius:50%;border:1px solid #8e8f8f;background:radial-gradient(circle at 40% 35%,#fff,#e0e0e0 70%,#cfcfcf)"></div><div class="a" style="left:740px;top:661px;width:6px;height:6px;border-radius:50%;background:radial-gradient(circle at 40% 35%,#8fd8ff,#1a7ac8 60%,#0a4a8a)"></div>
<div class="t11" style="left:753px;top:657px">Получить IP-адрес автоматически</div>
<div class="a" style="left:735px;top:678px;width:206px;height:14px;background:#fff"></div><div class="a" style="left:737px;top:679px;width:12px;height:12px;border-radius:50%;border:1px solid #8e8f8f;background:radial-gradient(circle at 40% 35%,#fff,#e0e0e0 70%,#cfcfcf)"></div>
<div class="t11" style="left:753px;top:679px">Использовать следующий IP-адрес:</div>
<div class="t11 dis" style="left:740px;top:703px;color:#8d8d8d">IP-адрес:</div>
<div class="field" style="left:915px;top:698px;width:125px;height:20px"></div><div class="a" style="left:947px;top:710px;width:2px;height:2px;background:#9a9a9a"></div><div class="a" style="left:977px;top:710px;width:2px;height:2px;background:#9a9a9a"></div><div class="a" style="left:1007px;top:710px;width:2px;height:2px;background:#9a9a9a"></div>
<div class="t11 dis" style="left:740px;top:729px;color:#8d8d8d">Маска подсети:</div>
<div class="field" style="left:915px;top:724px;width:125px;height:20px"></div><div class="a" style="left:947px;top:736px;width:2px;height:2px;background:#9a9a9a"></div><div class="a" style="left:977px;top:736px;width:2px;height:2px;background:#9a9a9a"></div><div class="a" style="left:1007px;top:736px;width:2px;height:2px;background:#9a9a9a"></div>
<div class="t11 dis" style="left:740px;top:755px;color:#8d8d8d">Основной шлюз:</div>
<div class="field" style="left:915px;top:750px;width:125px;height:20px"></div><div class="a" style="left:947px;top:762px;width:2px;height:2px;background:#9a9a9a"></div><div class="a" style="left:977px;top:762px;width:2px;height:2px;background:#9a9a9a"></div><div class="a" style="left:1007px;top:762px;width:2px;height:2px;background:#9a9a9a"></div>
<div class="a" style="left:737px;top:792px;width:12px;height:12px;border-radius:50%;border:1px solid #8e8f8f;background:radial-gradient(circle at 40% 35%,#fff,#e0e0e0 70%,#cfcfcf)"></div><div class="a" style="left:740px;top:795px;width:6px;height:6px;border-radius:50%;background:radial-gradient(circle at 40% 35%,#8fd8ff,#1a7ac8 60%,#0a4a8a)"></div>
<div class="t11" style="left:753px;top:792px">Получить адрес DNS-сервера автоматически</div>
<div class="a" style="left:735px;top:813px;width:272px;height:14px;background:#fff"></div><div class="a" style="left:737px;top:814px;width:12px;height:12px;border-radius:50%;border:1px solid #8e8f8f;background:radial-gradient(circle at 40% 35%,#fff,#e0e0e0 70%,#cfcfcf)"></div>
<div class="t11" style="left:753px;top:813px">Использовать следующие адреса DNS-серверов:</div>
<div class="t11 dis" style="left:740px;top:838px;color:#8d8d8d">Предпочитаемый DNS-сервер:</div>
<div class="field" style="left:915px;top:832px;width:125px;height:20px"></div><div class="a" style="left:947px;top:844px;width:2px;height:2px;background:#9a9a9a"></div><div class="a" style="left:977px;top:844px;width:2px;height:2px;background:#9a9a9a"></div><div class="a" style="left:1007px;top:844px;width:2px;height:2px;background:#9a9a9a"></div>
<div class="t11 dis" style="left:740px;top:864px;color:#8d8d8d">Альтернативный DNS-сервер:</div>
<div class="field" style="left:915px;top:859px;width:125px;height:20px"></div><div class="a" style="left:947px;top:871px;width:2px;height:2px;background:#9a9a9a"></div><div class="a" style="left:977px;top:871px;width:2px;height:2px;background:#9a9a9a"></div><div class="a" style="left:1007px;top:871px;width:2px;height:2px;background:#9a9a9a"></div>
<div class="a" style="left:741px;top:905px;width:13px;height:13px;border:1px solid #b0b0b0;background:#f4f4f4"></div>
<div class="t11" style="left:757px;top:906px;color:#8d8d8d">Подтвердить параметры при выходе</div>
<div class="btn" style="left:976px;top:905px;width:108px;height:21px">Дополнительно...</div>
<div class="btn" style="left:944px;top:949px;width:73px;height:21px">OK</div>
<div class="btn" style="left:1025px;top:949px;width:73px;height:21px">Отмена</div>

<!-- ================= FLYOUT ================= -->
<!-- orb on desktop -->
<svg class="a" style="left:1458px;top:654px" width="60" height="31" viewBox="0 0 60 31">
 <defs><radialGradient id="orbg" cx=".5" cy=".6" r=".55"><stop offset="0" stop-color="#3e8aa8"/><stop offset=".7" stop-color="#2c7394"/><stop offset=".92" stop-color="#4a9ac0"/><stop offset="1" stop-color="#b8e4ff"/></radialGradient>
 <radialGradient id="orbc" cx=".5" cy=".5" r=".5"><stop offset="0" stop-color="#fffdf2"/><stop offset=".7" stop-color="#fff2d0"/><stop offset="1" stop-color="#ffe2a8" stop-opacity=".6"/></radialGradient></defs>
 <circle cx="30" cy="30" r="26.5" fill="url(#orbg)"/>
 <circle cx="30" cy="30" r="26" fill="none" stroke="#a8dcf8" stroke-width="1.2" opacity=".8"/>
 <circle cx="30" cy="35" r="15" fill="url(#orbc)"/>
 <ellipse cx="17" cy="23" rx="3.5" ry="2.5" fill="#fff" opacity=".85"/>
 <path d="M19 30C24 23 36 23 41 30" stroke="#f0a01c" stroke-width="3.2" fill="none"/>
 <path d="M25 32C28 29 32 29 35 32" stroke="#e88a10" stroke-width="3" fill="none"/>
</svg>
<div id="fly" class="a" style="left:1249px;top:684px;width:297px;height:381px;background:#fff;border:1px solid #4a4f57;border-bottom:none"></div>
<div class="t" style="left:1261px;top:696px;color:#1e1e1e">Текущие подключения:</div>
<svg class="a" style="left:1522px;top:691px" width="17" height="16" viewBox="0 0 16 14"><path d="M6 1C4 1 3.5 3 3.5 5H1L4.5 9L8 5H5.5C5.5 3.5 6 2 7 1Z" fill="#2f74c6"/><path d="M10 13C12 13 12.5 11 12.5 9H15L11.5 5L8 9H10.5C10.5 10.5 10 12 9 13Z" fill="#2f74c6"/></svg>
<svg class="a" style="left:1256px;top:715px" width="38" height="35" viewBox="0 0 60 55"><use href="#bench"/></svg>
<div class="t" style="left:1299px;top:721px;font-weight:bold">Неопознанная сеть</div>
<div class="t" style="left:1299px;top:736px">Без доступа к Интернету</div>
<svg class="a" style="left:1258px;top:760px" width="34" height="31" viewBox="0 0 34 31"><g transform="translate(3,0) scale(.95)"><use href="#multi" width="32" height="29"/></g><circle cx="7.5" cy="23" r="7" fill="#1a1a1a" stroke="#9a9a9a" stroke-width="1.5"/><path d="M7.5 18.5V23L10.5 25" stroke="#fff" stroke-width="1.4" fill="none"/></svg>
<div class="t" style="left:1299px;top:760px;font-weight:bold">Идентификация... (V2)</div>
<div class="t" style="left:1299px;top:776px">Без доступа к сети</div>
<div class="a" style="left:1250px;top:798px;width:295px;height:1px;background:#c9ced6"></div>
<div class="t" style="left:1259px;top:809px;color:#4a4a4a;letter-spacing:-.14px">Удаленный доступ и виртуальные частные се...</div>
<svg class="a" style="left:1525px;top:811px" width="9" height="6" viewBox="0 0 9 6"><path d="M1.3 5.2L4.5 2L7.7 5.2" stroke="#0c2a66" stroke-width="2.4" fill="none"/></svg>
<div class="t link" style="left:1259px;top:839px">SkyLink</div>
<svg class="a" style="left:1511px;top:836px" width="24" height="20" viewBox="0 0 24 20"><path d="M9 1L22 5L23 12L16 19L1 15L2 11Z" fill="#cfd4da" stroke="#8e969f" stroke-width=".6"/><path d="M9 1L22 5L17 11L3 8Z" fill="#e6e9ed"/><path d="M3 8L17 11L16 19L1 15L2 11Z" fill="#d2d7dd"/><path d="M7 2C5 3 3 6 3 8L6 9C6 7 8 4 10 3Z" fill="#8a9098" stroke="#5a6068" stroke-width=".5"/><path d="M12 3L21 5.5L19 8L10.5 5.5Z" fill="#5aa8e8"/><path d="M3 14L15 17.5V19L1.5 15.5Z" fill="#3a6aa8" opacity=".75"/><path d="M9 8h2v1.2h-2zM12 8.8h2V10h-2zM15 9.6h2v1.2h-2z" fill="#9aa2ac"/></svg>
<div class="a" style="left:1250px;top:860px;width:295px;height:1px;background:#c9ced6"></div>
<div class="t" style="left:1259px;top:871px;color:#4a4a4a">Беспроводное сетевое соединение</div>
<svg class="a" style="left:1525px;top:873px" width="9" height="6" viewBox="0 0 9 6"><path d="M1.3 5.2L4.5 2L7.7 5.2" stroke="#0c2a66" stroke-width="2.4" fill="none"/></svg>
<div class="t link" style="left:1259px;top:901px;font-weight:bold">V2</div>
<div class="t" style="left:1427px;top:901px;font-weight:bold">Подключено</div>
<svg class="a" style="left:1511px;top:899px" width="23" height="18" viewBox="0 0 23 18"><path d="M12 4L5 12M12 4L17 13M5 12L17 13" stroke="#7ad08a" stroke-width=".9"/><rect x="9.5" y="0.5" width="5.5" height="4.5" fill="#1a2ac0"/><rect x="12" y="1" width="3" height="3.5" fill="#8aa0f0"/><rect x="1" y="9.5" width="6" height="5" fill="#1a2ac0"/><rect x="4" y="10" width="3" height="4" fill="#8aa0f0"/><rect x="14" y="11" width="6.5" height="5.5" fill="#1a2ac0"/><rect x="17.5" y="11.5" width="3" height="4.5" fill="#9ab0f4"/><path d="M1 15h6v1h-6zM14 17h6.5v1h-6.5z" fill="#b0c0e0"/></svg>
<div class="t link" style="left:1259px;top:931px">Voo Net</div>
<svg class="a" style="left:1512px;top:927px" width="22" height="19" viewBox="0 0 22 19"><rect x="0" y="13" width="3" height="6" fill="#2f9a48"/><rect x="4.5" y="10" width="3" height="9" fill="#2f9a48"/><rect x="9" y="7" width="3" height="12" fill="#2f9a48"/><rect x="13.5" y="3.5" width="3" height="15.5" fill="#2f9a48"/><rect x="18" y="0" width="3" height="19" fill="#bcbcbc"/><rect x="0" y="13" width="1" height="6" fill="#8ad89a"/><rect x="4.5" y="10" width="1" height="9" fill="#8ad89a"/><rect x="9" y="7" width="1" height="12" fill="#8ad89a"/><rect x="13.5" y="3.5" width="1" height="15.5" fill="#8ad89a"/></svg>
<div class="a" style="left:1250px;top:1022px;width:295px;height:43px;background:#f1f5fb;border-top:1px solid #dfe6ef"></div>
<div class="t link" style="left:1270px;top:1039px;color:#1e55a6">Центр управления сетями и общим доступом</div>
<!-- ================= TASKBAR ================= -->
<div id="task" class="a" style="left:0;top:1065px;width:1546px;height:30px;background:linear-gradient(#8a9ab0,#8293a9);border-top:1px solid #1c2836;box-shadow:inset 0 1px 0 #c4d2e2"></div>
<div class="a" style="left:-6px;top:1066px;width:10px;height:29px;border:1px solid #c8d2de;border-radius:3px;background:linear-gradient(#b8c4d2,#8d9db1)"></div>
<div class="a" style="left:21px;top:1072px;width:16px;height:16px;background:#a8d0f0;border:1px solid #cfe6f8"></div>
<div class="a" style="left:23px;top:1074px;width:12px;height:12px;border-radius:50%;background:#f08a1c"></div>
<svg class="a" style="left:26px;top:1076px" width="7" height="8" viewBox="0 0 7 8"><path d="M0.5 0.5L6.5 4L0.5 7.5Z" fill="#fff"/></svg>
<div class="a" style="left:54px;top:1066px;width:158px;height:29px;border:1px solid #2e3846;border-top-color:#5a6676;border-radius:3px;background:linear-gradient(#c6ced8 0%,#aab5c3 45%,#909eb0 100%);box-shadow:inset 0 1px 0 #eef2f6,inset 1px 0 0 #dde3ea"></div>
<div class="t" style="left:84px;top:1073px;color:#fff;text-shadow:0 0 3px rgba(20,30,50,.6),0 0 1px rgba(20,30,50,.5)">Фотоальбом (Elite G...</div>
<div class="a" style="left:216px;top:1066px;width:158px;height:29px;border:1px solid #2e3846;border-top-color:#5a6676;border-radius:3px;background:linear-gradient(#c6ced8 0%,#aab5c3 45%,#909eb0 100%);box-shadow:inset 0 1px 0 #eef2f6,inset 1px 0 0 #dde3ea"></div>
<div class="t" style="left:246px;top:1073px;color:#fff;text-shadow:0 0 3px rgba(20,30,50,.6),0 0 1px rgba(20,30,50,.5)">Wireless Configurati...</div>
<div class="a" style="left:378px;top:1066px;width:158px;height:29px;border:1px solid #2e3846;border-top-color:#5a6676;border-radius:3px;background:linear-gradient(#c6ced8 0%,#aab5c3 45%,#909eb0 100%);box-shadow:inset 0 1px 0 #eef2f6,inset 1px 0 0 #dde3ea"></div>
<div class="t" style="left:408px;top:1073px;color:#fff;text-shadow:0 0 3px rgba(20,30,50,.6),0 0 1px rgba(20,30,50,.5)">Центр управления с...</div>
<svg class="a" style="left:63px;top:1071px" width="17" height="17" viewBox="0 0 17 17"><circle cx="9" cy="9" r="6.5" fill="none" stroke="#2a8ad8" stroke-width="3"/><path d="M3.5 9H14" stroke="#2a8ad8" stroke-width="2.2"/><path d="M1 15C3 10 10 3 16 1" stroke="#f0b830" stroke-width="1.8" fill="none"/></svg>
<div class="a" style="left:225px;top:1072px;width:16px;height:16px;background:#1a1a1a;border-radius:2px"></div>
<div class="a" style="left:226px;top:1073px;width:14px;height:14px;border-radius:50%;background:radial-gradient(circle,#f8c060,#c86a10 70%,#5a2a05)"></div>
<svg class="a" style="left:386px;top:1071px" width="17" height="17" viewBox="0 0 17 17"><g fill="#e8ecf2" stroke="#a8b0bc" stroke-width=".5"><rect x="2.5" y="1" width="5" height="4.5"/><rect x="9.5" y="1" width="5" height="4.5"/><rect x="2.5" y="7" width="5" height="4.5"/><rect x="9.5" y="7" width="5" height="4.5"/></g><g fill="#0a1a9a"><path d="M3 1.5h3l-3 3z"/><path d="M10 1.5h3l-3 3z"/><path d="M3 7.5h3l-3 3z"/><path d="M10 7.5h3l-3 3z"/></g><path d="M7 11L8.5 9L10 11V13H12V15H5V13H7Z" fill="#20b060"/><rect x="1" y="13.2" width="15" height=".8" fill="#d8e0e8"/><rect x="1" y="15" width="15" height=".8" fill="#d8e0e8"/></svg>
<div class="t" style="left:1284px;top:1072px;color:#fff">EN</div>
<svg class="a" style="left:1315px;top:1078px" width="10" height="6" viewBox="0 0 10 6"><path d="M0 6L5 0.5L10 6Z" fill="#fff"/></svg>
<svg class="a" style="left:1335px;top:1073px" width="18" height="16" viewBox="0 0 18 16"><rect x="2" y="0" width="5" height="4" fill="#d0d0d0"/><path d="M1 4h7v6l-2 2v4h-3v-4l-2-2z" fill="#6a6a6a"/><circle cx="12" cy="11" r="5" fill="#2a9a3a"/><path d="M9.5 11L11.5 13L14.5 8.5" stroke="#fff" stroke-width="1.5" fill="none"/></svg>
<svg class="a" style="left:1359px;top:1073px" width="17" height="16" viewBox="0 0 17 16"><path d="M1 5H5L10 1V15L5 11H1Z" fill="#f07a30" stroke="#3a1a0a" stroke-width="1"/><path d="M12 5C13 6.5 13 9.5 12 11M14 3C16 6 16 10 14 13" stroke="#3a3a3a" stroke-width="1" fill="none"/></svg>
<svg class="a" style="left:1384px;top:1073px" width="17" height="16" viewBox="0 0 17 16"><rect x="1" y="0" width="1.5" height="16" fill="#333"/><path d="M2.5 1H10L12 4H14V10H7L6 8H2.5Z" fill="#fff" stroke="#555" stroke-width=".6"/><circle cx="12" cy="11.5" r="4.3" fill="#e02a2a"/><path d="M10.3 9.8L13.7 13.2M13.7 9.8L10.3 13.2" stroke="#fff" stroke-width="1.3"/></svg>
<svg class="a" style="left:1407px;top:1073px" width="18" height="16" viewBox="0 0 18 16"><rect x="0" y="12" width="3" height="3" fill="#3a4a5a"/><rect x="4" y="9" width="3" height="6" fill="#3a4a5a"/><rect x="8" y="6" width="3" height="9" fill="#3a4a5a"/><rect x="12" y="2" width="3" height="13" fill="#3a4a5a"/><circle cx="11" cy="10" r="4.5" fill="none" stroke="#30c8d8" stroke-width="2.5"/></svg>
<svg class="a" style="left:1432px;top:1073px" width="17" height="16" viewBox="0 0 17 16"><path d="M1 5H5L10 1V15L5 11H1Z" fill="#f0f0f0" stroke="#555" stroke-width="1"/><path d="M12 5C13 6.5 13 9.5 12 11M14 3C16 6 16 10 14 13" stroke="#f0f0f0" stroke-width="1.2" fill="none"/></svg>
<div class="t" style="left:1482px;top:1075px;color:#fff">0:27</div>
<div class="a" style="left:1532px;top:1066px;width:14px;height:29px;border:1px solid #c8d2de;border-right:none;background:linear-gradient(90deg,#9aa8ba,#7c8ca0)"></div>

</body></html>
